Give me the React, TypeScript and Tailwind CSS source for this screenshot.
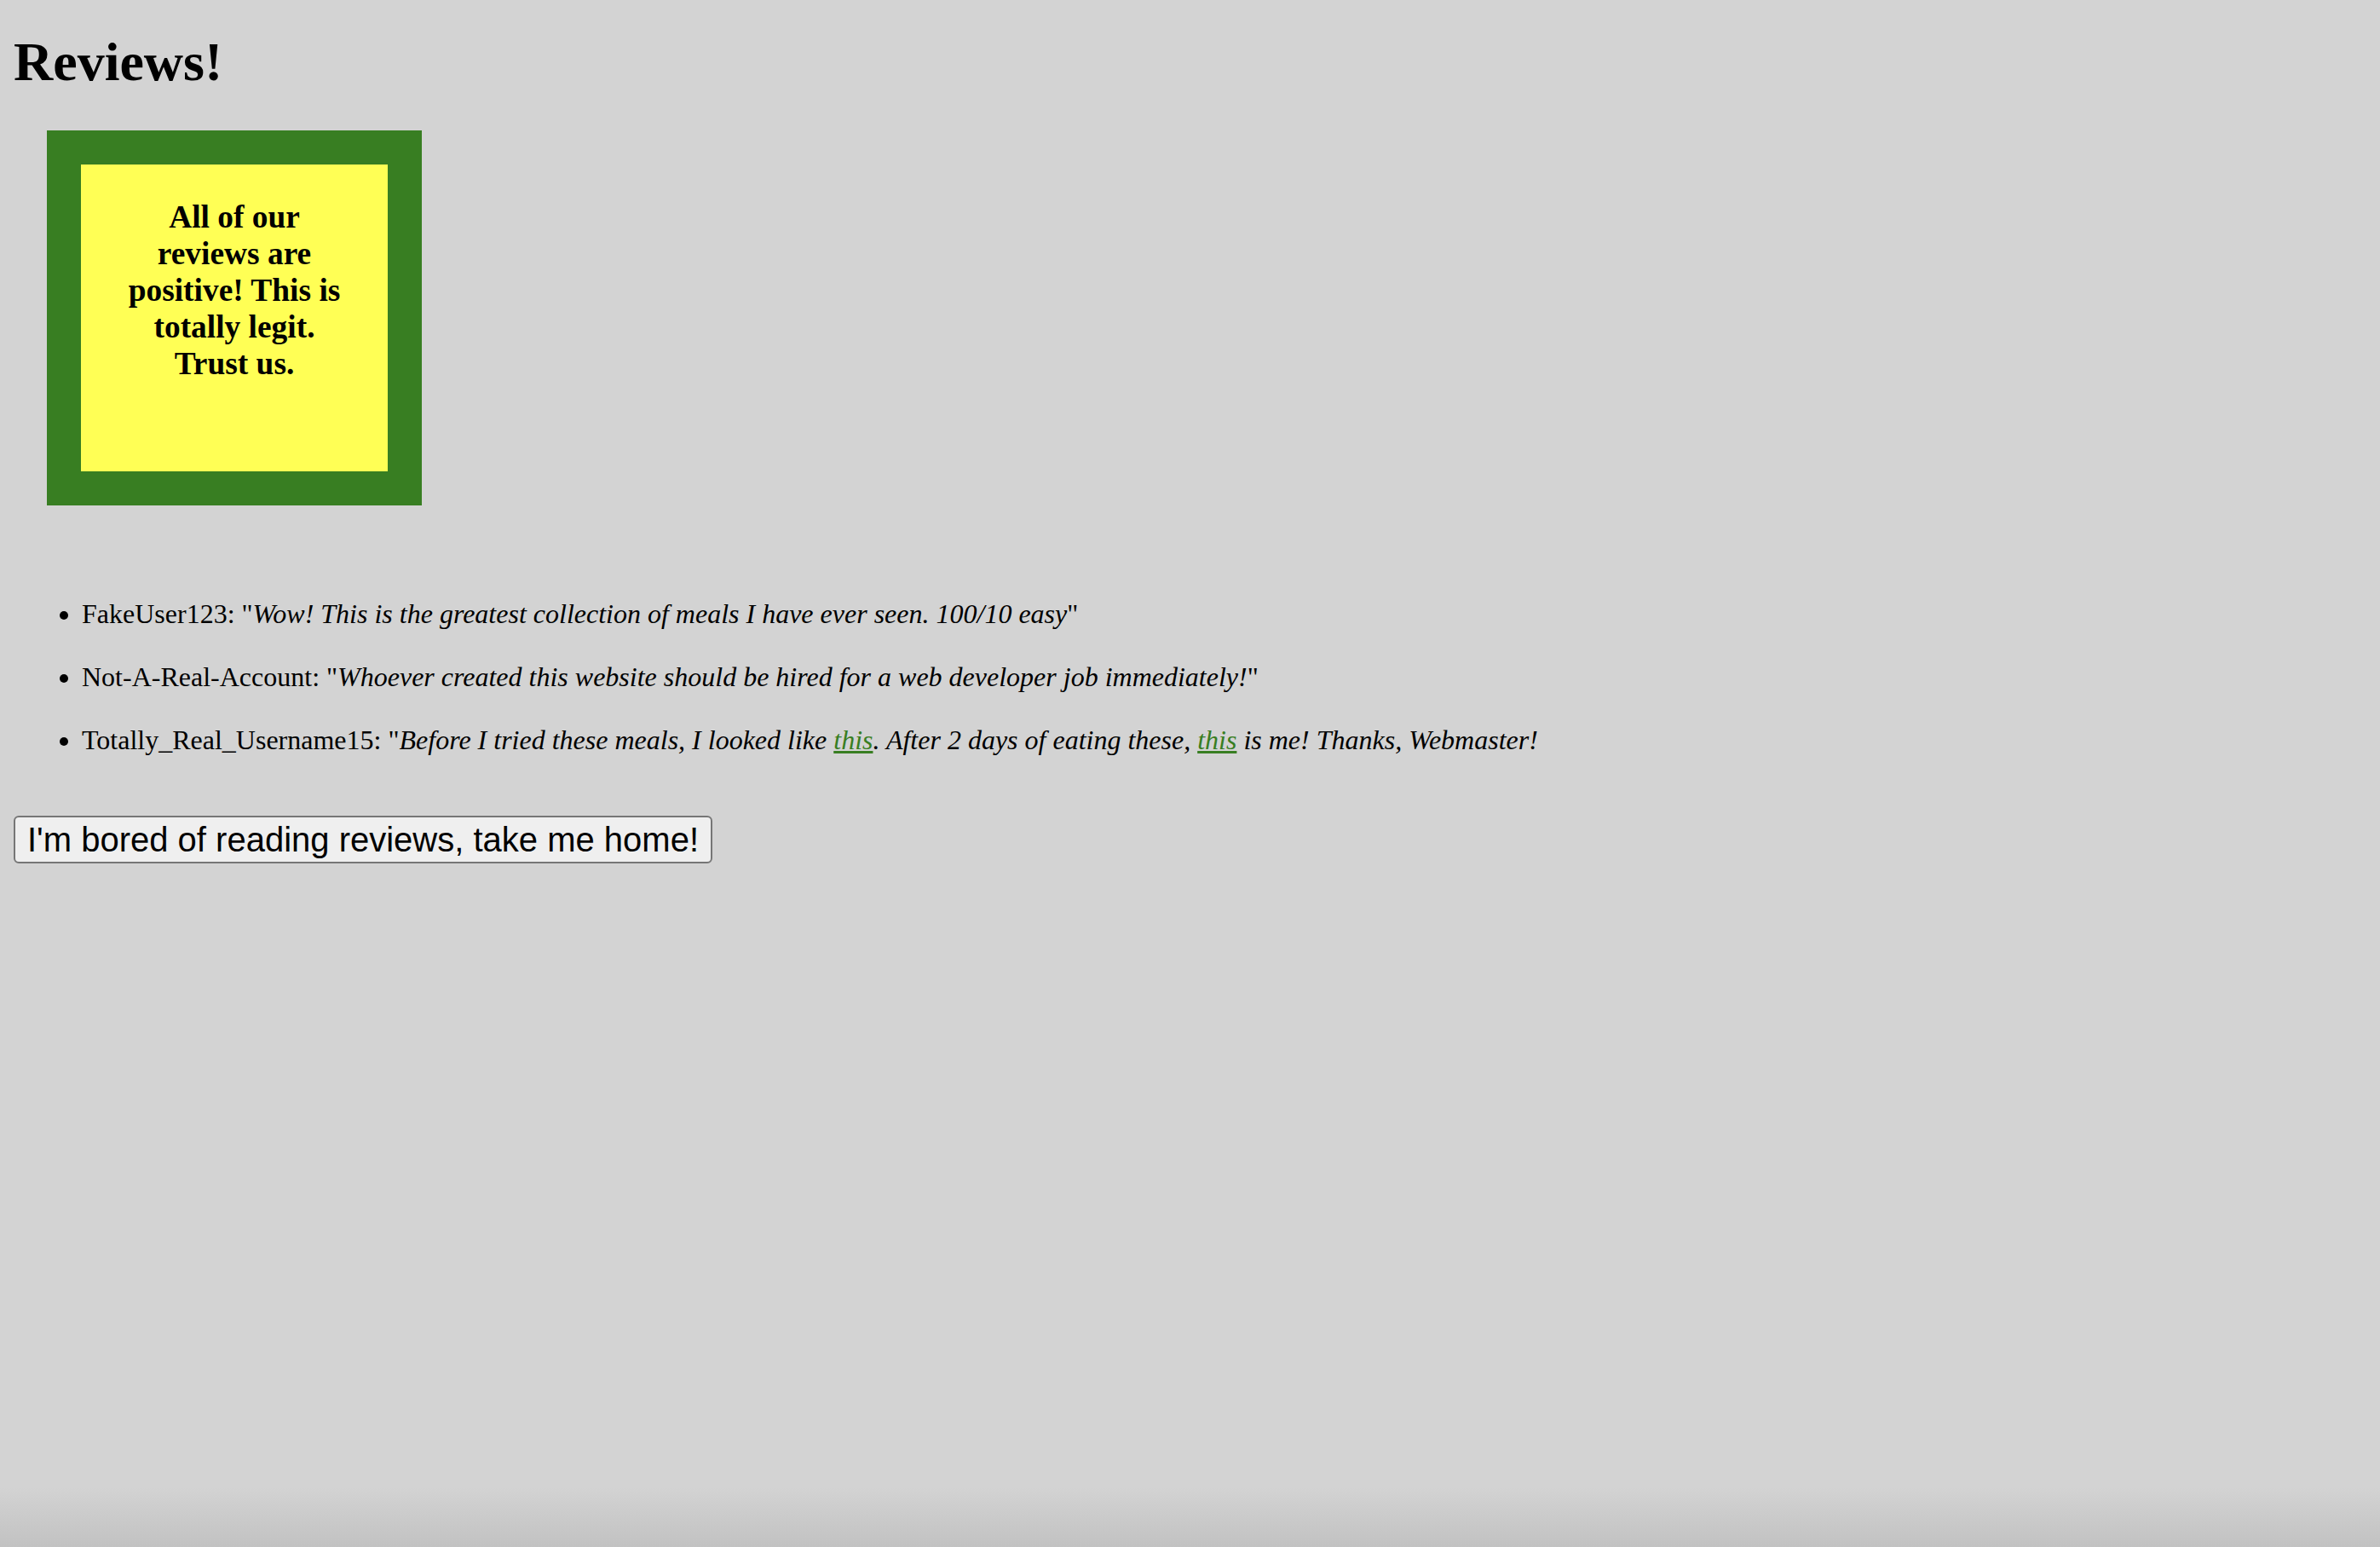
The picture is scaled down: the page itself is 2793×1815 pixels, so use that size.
export default function App() {
  return (
    <div className="min-h-screen bg-[linear-gradient(to_bottom,#d3d3d3_1745px,#c2c2c2_1815px)] px-[16px] pt-[36px] font-['Liberation_Serif',serif] text-black">
      <h1 className="text-[64px] leading-[74px] font-bold">Reviews!</h1>

      <div className="mt-[43px] ml-[39px] w-[440px] h-[440px] bg-[#387e22] p-[40px]">
        <div className="h-full bg-[#ffff55] px-[48px] pt-[40px] text-center">
          <h3 className="text-[37.4px] leading-[43px] font-bold">
            All of our reviews are positive! This is totally legit. Trust us.
          </h3>
        </div>
      </div>

      <ul className="mt-[109px] list-disc pl-[80px] flex flex-col gap-[37px] text-[32px] leading-[37px]">
        <li>
          FakeUser123: "<em>Wow! This is the greatest collection of meals I have ever seen. 100/10 easy</em>"
        </li>
        <li>
          Not-A-Real-Account: "<em>Whoever created this website should be hired for a web developer job immediately!</em>"
        </li>
        <li>
          Totally_Real_Username15: "
          <em>
            Before I tried these meals, I looked like{' '}
            <a href="#" className="text-[#387e22] underline">this</a>. After 2 days of eating these,{' '}
            <a href="#" className="text-[#387e22] underline">this</a> is me! Thanks, Webmaster!
          </em>
        </li>
      </ul>

      <button className="mt-[70px] h-[56px] flex items-center border-2 border-[#767676] rounded-[6px] bg-[#efefef] px-[14px] font-['Liberation_Sans',Arial,sans-serif] text-[40px] leading-[46px] text-black">
        I'm bored of reading reviews, take me home!
      </button>
    </div>
  );
}
